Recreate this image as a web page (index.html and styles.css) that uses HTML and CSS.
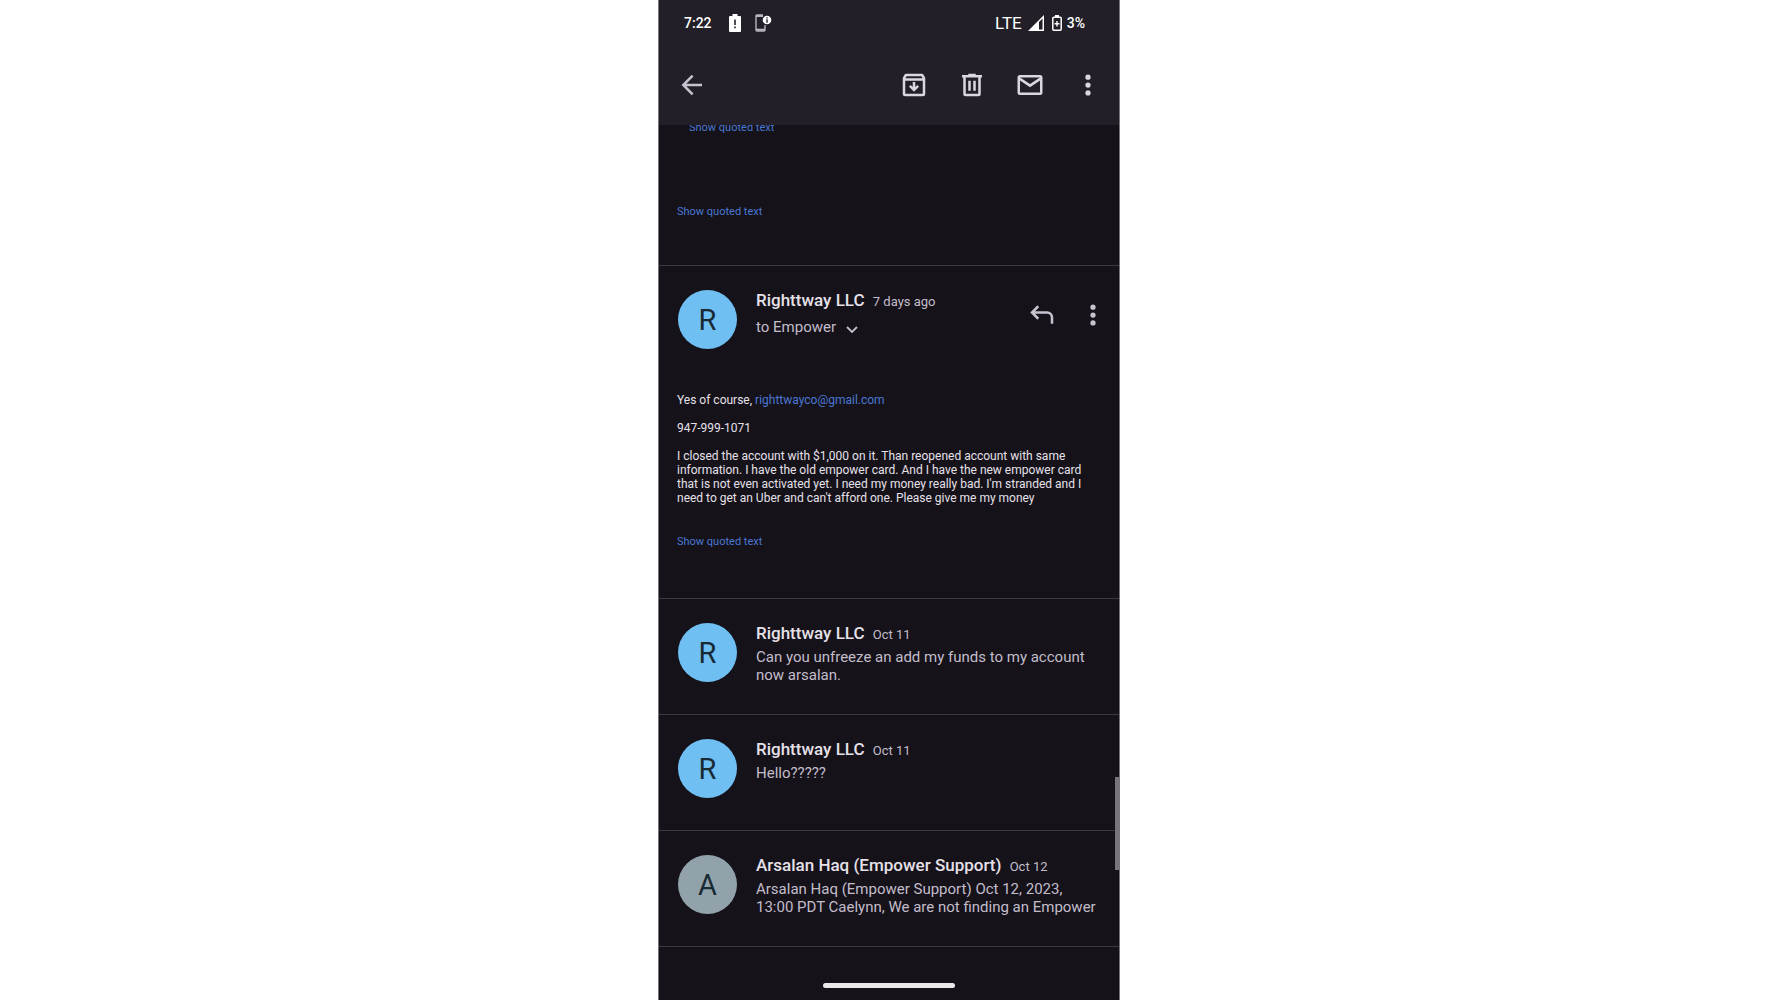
FILE: index.html
```html
<!DOCTYPE html>
<html lang="en">
<head>
<meta charset="utf-8">
<meta name="viewport" content="width=device-width, initial-scale=1">
<title>Mail conversation</title>
<link rel="stylesheet" href="styles.css">
</head>
<body>
<svg class="sprite" aria-hidden="true">
  <symbol id="dots" viewBox="0 0 24 24"><circle cx="12" cy="5.7" r="2.1"/><circle cx="12" cy="12" r="2.1"/><circle cx="12" cy="18.3" r="2.1"/></symbol>
</svg>
<main class="phone">
  <header class="top">
    <div class="status">
      <span class="clock">7:22</span>
      <svg class="status-alert" viewBox="0 0 12 18" aria-hidden="true"><path fill="#fff" fill-rule="evenodd" d="M3.5 0h5v2H11a1 1 0 0 1 1 1v14a1 1 0 0 1-1 1H1a1 1 0 0 1-1-1V3a1 1 0 0 1 1-1h2.500zM5.200 5.500v5.500h1.600V5.500zM5.200 12.500v1.700h1.600v-1.700z"/></svg>
      <svg class="status-device" viewBox="0 0 17 18" aria-hidden="true"><path fill="none" stroke="#b9b6be" stroke-width="1.400" d="M8 1H2a1 1 0 0 0-1 1v14a1 1 0 0 0 1 1h7a1 1 0 0 0 1-1v-5"/><path stroke="#b9b6be" stroke-width="2" d="M1 2h7M1 15.700h9"/><circle cx="12" cy="6" r="4.300" fill="#fff"/><path stroke="#221f28" stroke-width="1.400" d="M12 3.300v1.200M12 5.300v3.400"/></svg>
      <span class="network">LTE</span>
      <svg class="status-signal" viewBox="0 0 16 16" aria-hidden="true"><path fill="#fff" fill-rule="evenodd" d="M16 0v16H0zM14.500 3.600 11 7.100v7.400h3.500z"/></svg>
      <svg class="status-battery" viewBox="0 0 10 16" aria-hidden="true"><path fill="#fff" d="M3 0h4v2H3z"/><rect x=".8" y="2.300" width="8.400" height="12.900" rx="1" fill="none" stroke="#fff" stroke-width="1.500"/><path fill="#fff" d="M4.300 6h1.400v2h1.800v1.400H5.700v2H4.300v-2H2.500V8h1.800z"/></svg>
      <span class="charge">3%</span>
    </div>
    <nav class="toolbar" aria-label="Conversation actions">
      <button class="icon-btn back" aria-label="Back"><svg viewBox="0 0 24 24"><path fill="none" stroke="currentColor" stroke-width="2" d="M20 12H5M12.500 4.500 5 12l7.500 7.500"/></svg></button>
      <button class="icon-btn" aria-label="Archive"><svg viewBox="0 0 24 24"><path fill="none" stroke="currentColor" stroke-width="2" stroke-linejoin="round" d="M4 6.500 5.500 4h13L20 6.500V19a1 1 0 0 1-1 1H5a1 1 0 0 1-1-1zM4 7.500h16"/><path fill="currentColor" d="M11 9.500h2v4l1.700-1.600 1.300 1.400-4 4-4-4 1.300-1.400 1.700 1.600z"/></svg></button>
      <button class="icon-btn" aria-label="Delete"><svg viewBox="0 0 24 24"><path fill="none" stroke="currentColor" stroke-width="2" d="M4 5h16M9 4h6M6 5v14a1 1 0 0 0 1 1h10a1 1 0 0 0 1-1V5M10 8.500v8M14 8.500v8"/></svg></button>
      <button class="icon-btn" aria-label="Mark as unread"><svg viewBox="0 0 24 24"><rect x="3" y="5" width="18" height="14" rx="1" fill="none" stroke="currentColor" stroke-width="2"/><path fill="none" stroke="currentColor" stroke-width="2" d="m3 6.500 9 6 9-6"/></svg></button>
      <button class="icon-btn" aria-label="More options"><svg viewBox="0 0 24 24" fill="currentColor"><use href="#dots"/></svg></button>
    </nav>
  </header>

  <div class="thread">
    <section class="earlier">
      <a class="quoted nested" href="#">Show quoted text</a>
      <a class="quoted" href="#">Show quoted text</a>
    </section>

    <article class="message open">
      <div class="head">
        <span class="avatar">R</span>
        <div class="summary">
          <h2 class="sender">Righttway LLC <time class="date">7 days ago</time></h2>
          <button class="recipient">to Empower <svg viewBox="0 0 12 8" aria-hidden="true"><path fill="none" stroke="currentColor" stroke-width="1.800" d="m1 1 5 5 5-5"/></svg></button>
        </div>
        <div class="actions">
          <button class="icon-btn" aria-label="Reply"><svg viewBox="0 0 24 24"><path fill="none" stroke="currentColor" stroke-width="2" d="M9 5 4 10l5 5M4 10h12a4 4 0 0 1 4 4v5"/></svg></button>
          <button class="icon-btn" aria-label="More message options"><svg viewBox="0 0 24 24" fill="currentColor"><use href="#dots"/></svg></button>
        </div>
      </div>
      <div class="body">
        <p>Yes of course, <a href="mailto:righttwayco@gmail.com">righttwayco@gmail.com</a></p>
        <p>947-999-1071</p>
        <p>I closed the account with $1,000 on it. Than reopened account with same information. I have the old empower card. And I have the new empower card that is not even activated yet. I need my money really bad. I'm stranded and I need to get an Uber and can't afford one. Please give me my money</p>
      </div>
      <a class="quoted" href="#">Show quoted text</a>
    </article>

    <article class="message">
      <div class="head">
        <span class="avatar">R</span>
        <div class="summary">
          <h2 class="sender">Righttway LLC <time class="date">Oct 11</time></h2>
          <p class="snippet">Can you unfreeze an add my funds to my account now arsalan.</p>
        </div>
      </div>
    </article>

    <article class="message">
      <div class="head">
        <span class="avatar">R</span>
        <div class="summary">
          <h2 class="sender">Righttway LLC <time class="date">Oct 11</time></h2>
          <p class="snippet">Hello?????</p>
        </div>
      </div>
    </article>

    <article class="message">
      <div class="head">
        <span class="avatar support">A</span>
        <div class="summary">
          <h2 class="sender">Arsalan Haq (Empower Support) <time class="date">Oct 12</time></h2>
          <p class="snippet">Arsalan Haq (Empower Support) Oct 12, 2023, 13:00 PDT Caelynn, We are not finding an Empower</p>
        </div>
      </div>
    </article>
    <div class="scroll-thumb"></div>
  </div>
  <footer class="gesture"><span class="pill"></span></footer>
</main>
</body>
</html>
```
FILE: styles.css
```css
* { box-sizing: border-box; }

body {
  margin: 0;
  background: #fff;
  color: #e6e1e9;
  font-family: Roboto, "Liberation Sans", sans-serif;
}

h2, p { margin: 0; font-weight: 400; }

a { color: #4b78d2; text-decoration: none; }

button {
  padding: 0;
  border: 0;
  background: none;
  color: inherit;
  font: inherit;
  cursor: pointer;
}

svg { display: block; }

.sprite { display: none; }

.phone {
  display: flex;
  flex-direction: column;
  width: 100%;
  max-width: 462px;
  min-height: 100vh;
  margin: 0 auto;
  border: solid #77757a;
  border-width: 0 1px;
  background: #15121a;
}

.top { background: #221f28; }

.status {
  display: flex;
  align-items: center;
  height: 46px;
  padding: 0 34px 0 25px;
  color: #fff;
  font-weight: 500;
}

.clock, .charge { font-size: 14px; }

.network {
  margin-left: auto;
  font-size: 17px;
  font-weight: 400;
}

.status-alert { width: 12px; height: 18px; margin-left: 17px; }
.status-device { width: 17px; height: 18px; margin-left: 14px; }
.status-signal { width: 16px; height: 16px; margin-left: 6px; }
.status-battery { width: 10px; height: 16px; margin: 0 5px 0 8px; }

.toolbar {
  display: flex;
  align-items: center;
  gap: 28px;
  height: 79px;
  padding: 0 16px 2px 18px;
  color: #dcd6e2;
}

.back { margin-right: auto; color: #c8c2d0; }

.icon-btn svg { width: 30px; height: 30px; }

.thread {
  position: relative;
  flex: 1;
  overflow: hidden;
}

.earlier {
  display: flex;
  flex-direction: column;
  gap: 70px;
  height: 140px;
  margin-top: -4px;
  padding-left: 18px;
}

.earlier + .message { margin-top: 4px; }

.quoted {
  display: block;
  font-size: 11px;
  line-height: 14px;
}

.nested { margin-left: 12px; }

.message {
  min-height: 116px;
  padding: 24px 18px 0;
  border-top: 1px solid #3c3941;
}

.message:last-of-type { border-bottom: 1px solid #3c3941; min-height: 117px; }

.open { min-height: 333px; }

.head { display: flex; padding-left: 1px; }

.avatar {
  flex: none;
  display: grid;
  place-items: center;
  width: 59px;
  height: 59px;
  border-radius: 50%;
  background: #70bff3;
  color: #182a34;
  font-size: 29px;
}

.support { background: #91a2aa; }

.summary {
  flex: 1;
  min-width: 0;
  padding-left: 19px;
}

.sender {
  font-size: 17px;
  font-weight: 500;
  line-height: 20px;
}

.date {
  margin-left: 4px;
  color: #c3bdca;
  font-size: 13px;
  font-weight: 400;
}

.snippet, .recipient {
  color: #c3bdca;
  font-size: 15px;
  line-height: 18px;
}

.snippet { margin-top: 3px; }

.recipient {
  display: flex;
  align-items: center;
  gap: 10px;
  margin-top: 6px;
}

.recipient svg { width: 12px; height: 8px; margin-top: 5px; }

.actions {
  display: flex;
  gap: 21px;
  align-self: flex-start;
  margin-right: -7px;
  padding-top: 10px;
  color: #c8c2d0;
}

.body {
  display: grid;
  gap: 14px;
  margin: 44px 0 30px;
  font-size: 12px;
  line-height: 14px;
}

.scroll-thumb {
  position: absolute;
  top: 652px;
  right: 0;
  width: 4px;
  height: 93px;
  background: #77747c;
}

.gesture {
  display: flex;
  justify-content: center;
  padding-bottom: 12px;
}

.pill {
  width: 132px;
  height: 5px;
  border-radius: 3px;
  background: #ebe8ec;
}
```
